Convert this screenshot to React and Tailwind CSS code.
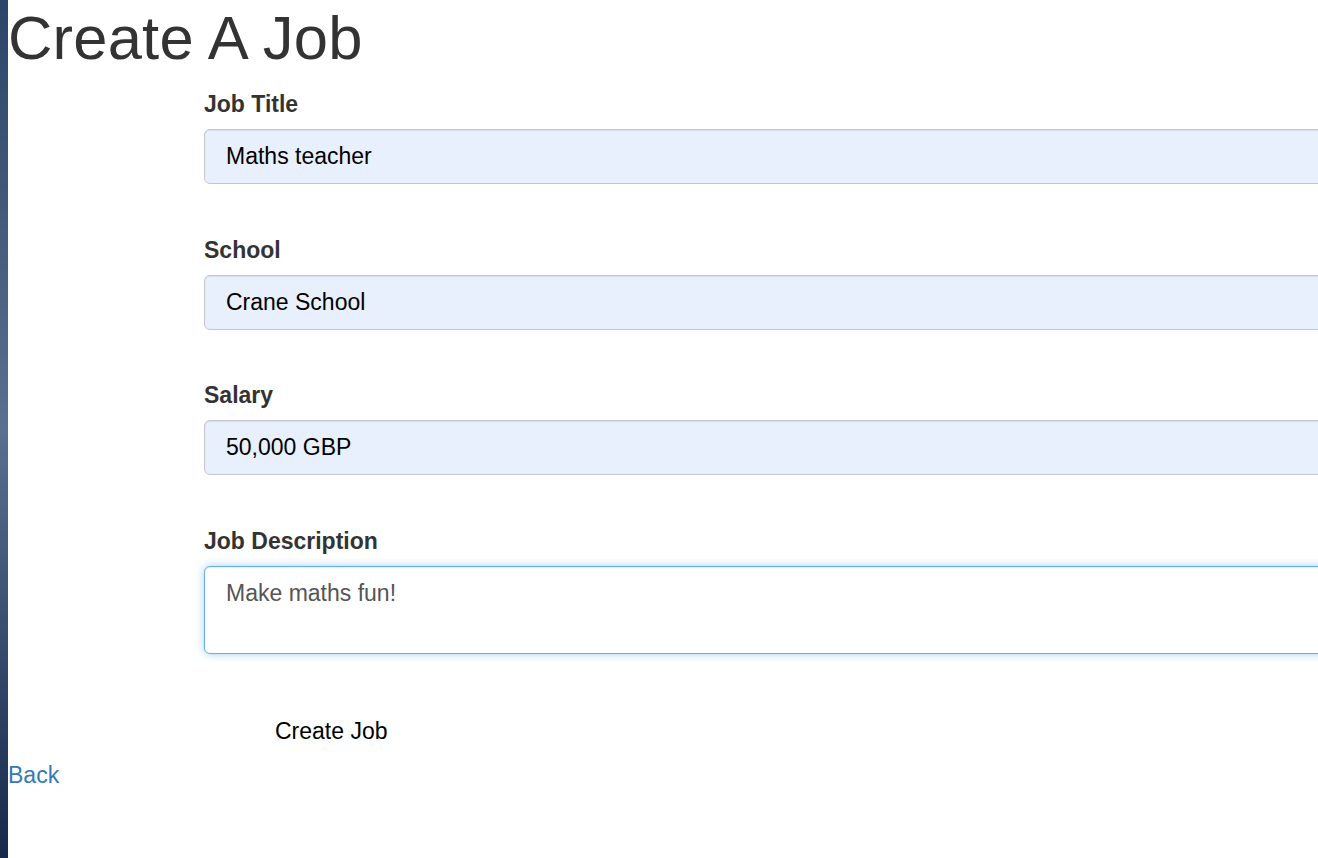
import React from 'react';

const fields = [
  { id: 'title', label: 'Job Title', value: 'Maths teacher' },
  { id: 'school', label: 'School', value: 'Crane School' },
  { id: 'salary', label: 'Salary', value: '50,000 GBP' },
];

const App = () => {
  return (
    <div className="flex min-h-[858px] bg-white font-['Liberation_Sans',Arial,sans-serif] text-[#333]">
      {/* Background strip */}
      <div className="w-2 shrink-0 bg-gradient-to-b from-[#2c4468] via-[#5b7090] to-[#17294a]" />

      <div className="flex-1 overflow-hidden">
        <h1 className="mt-[5px] h-[66px] text-[61.5px] leading-[66px] font-normal tracking-[0.2px] text-[#333]">
          Create A Job
        </h1>

        <form className="ml-[196px] mt-[20px]">
          {fields.map((field) => (
            <div key={field.id} className="mb-[52.5px]">
              <label className="block h-[26px] text-[23px] leading-[26px] font-bold text-[#333] mb-[12px]">
                {field.label}
              </label>
              <input
                readOnly
                value={field.value}
                className="block h-[55px] w-[1200px] rounded-[6px] border border-[#c6c6c6] bg-[#e8f0fe] px-[21px] text-[23px] text-black shadow-[inset_0_1px_1px_rgba(0,0,0,0.075)] outline-none"
              />
            </div>
          ))}

          <div>
            <label className="block h-[26px] text-[23px] leading-[26px] font-bold text-[#333] mb-[12px]">
              Job Description
            </label>
            <textarea
              readOnly
              value="Make maths fun!"
              className="block h-[88px] w-[1200px] resize-none rounded-[6px] border border-[#66afe9] bg-white px-[21px] pt-[12px] text-[23px] leading-[28px] text-[#555] shadow-[inset_0_1px_1px_rgba(0,0,0,0.075),0_0_8px_rgba(102,175,233,0.6)] outline-none"
            />
          </div>

          <button type="button" className="ml-[71px] mt-[64px] block h-[26px] text-[23px] leading-[26px] text-black">
            Create Job
          </button>
        </form>

        <a href="#" className="mt-[18px] block h-[26px] text-[23px] leading-[26px] text-[#337ab7]">
          Back
        </a>
      </div>
    </div>
  );
};

export default App;
